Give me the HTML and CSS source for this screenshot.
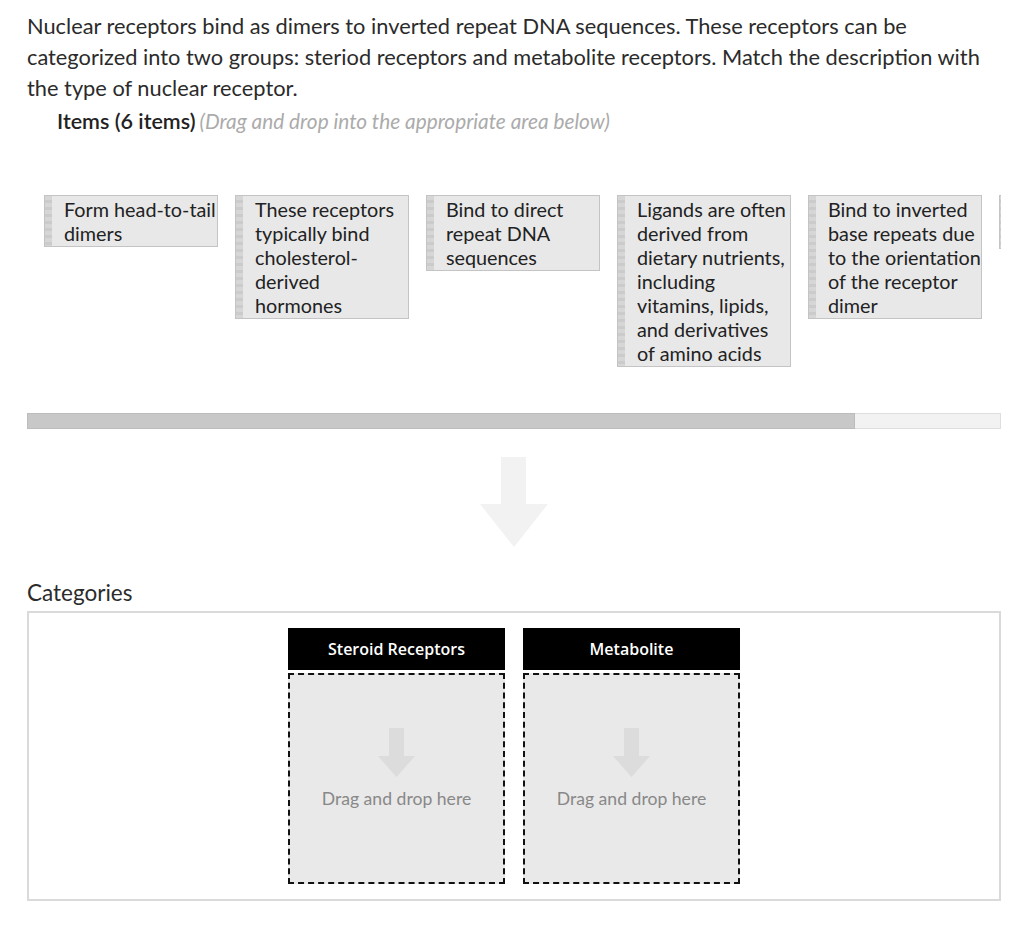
FILE: index.html
```html
<!DOCTYPE html>
<html lang="en">
<head>
<meta charset="utf-8">
<title>Nuclear receptors – matching</title>
<link rel="stylesheet" href="styles.css">
</head>
<body>
  <p class="prompt">Nuclear receptors bind as dimers to inverted repeat DNA sequences. These receptors can be categorized into two groups: steriod receptors and metabolite receptors. Match the description with the type of nuclear receptor.</p>

  <div class="items-title"><span class="items-label">Items (6 items)</span> <span class="items-hint">(Drag and drop into the appropriate area below)</span></div>

  <div class="items-scroll">
    <div class="items-track">
      <div class="card"><span class="handle"></span><span class="card-text">Form head-to-tail dimers</span></div>
      <div class="card"><span class="handle"></span><span class="card-text">These receptors typically bind cholesterol-derived hormones</span></div>
      <div class="card"><span class="handle"></span><span class="card-text">Bind to direct repeat DNA sequences</span></div>
      <div class="card"><span class="handle"></span><span class="card-text">Ligands are often derived from dietary nutrients, including vitamins, lipids, and derivatives of amino acids</span></div>
      <div class="card"><span class="handle"></span><span class="card-text">Bind to inverted base repeats due to the orientation of the receptor dimer</span></div>
      <div class="card card-offscreen"><span class="handle"></span><span class="card-text"></span></div>
    </div>
  </div>
  <div class="scrollbar"><div class="scroll-thumb"></div></div>

  <div class="big-arrow">
    <svg width="68" height="90" viewBox="0 0 68 90"><polygon points="21,0 46,0 46,47 68,47 34,90 0,47 21,47" fill="#f2f2f2"/></svg>
  </div>

  <h2 class="categories-title">Categories</h2>
  <div class="categories">
    <div class="category">
      <div class="category-head">Steroid Receptors</div>
      <div class="dropzone">
        <svg class="drop-arrow" width="37" height="49" viewBox="0 0 37 49"><polygon points="11,0 26,0 26,28 37,28 18.5,49 0,28 11,28" fill="#dcdcdc"/></svg>
        <div class="drop-text">Drag and drop here</div>
      </div>
    </div>
    <div class="category">
      <div class="category-head">Metabolite</div>
      <div class="dropzone">
        <svg class="drop-arrow" width="37" height="49" viewBox="0 0 37 49"><polygon points="11,0 26,0 26,28 37,28 18.5,49 0,28 11,28" fill="#dcdcdc"/></svg>
        <div class="drop-text">Drag and drop here</div>
      </div>
    </div>
  </div>
</body>
</html>
```

FILE: styles.css
```css
html, body {
  background: #fff;
}

body {
  margin: 0;
  padding: 10px 23px 40px 27px;
  font-family: Lato, "Open Sans", "Liberation Sans", sans-serif;
  color: #2b2b2b;
}

.prompt {
  margin: 0;
  font-size: 21.8px;
  line-height: 31px;
}

.items-title {
  margin: 6px 0 0 30px;
  line-height: 24px;
}

.items-label {
  font-size: 21.5px;
  font-weight: 600;
  color: #222;
}

.items-hint {
  font-size: 20.8px;
  font-style: italic;
  color: #ababab;
}

.items-scroll {
  margin-top: 60px;
  overflow: hidden;
  height: 218px;
}

.items-track {
  display: flex;
  align-items: flex-start;
  gap: 17px;
  padding-left: 17px;
}

.card {
  flex: 0 0 174px;
  box-sizing: border-box;
  display: flex;
  background: #e8e8e8;
  border: 1px solid #c4c4c4;
  font-size: 19.8px;
  line-height: 24px;
  color: #222;
}

.card-offscreen {
  height: 54px;
}

.handle {
  flex: 0 0 7px;
  align-self: stretch;
  background:
    repeating-linear-gradient(to bottom, #d6d6d6 0 4px, #cbcbcb 4px 7px);
}

.card-text {
  padding: 1px 0 1px 12px;
  flex: 1;
  min-width: 0;
}

/* custom scrollbar under the card strip */
.scrollbar {
  height: 16px;
  box-sizing: border-box;
  background: #f2f2f2;
  border: 1px solid #dedede;
  display: flex;
}

.scroll-thumb {
  width: 85.2%;
  background: #c8c8c8;
  box-shadow: inset 0 0 0 1px #bcbcbc;
  margin: -1px 0 -1px -1px;
}

.big-arrow {
  display: flex;
  justify-content: center;
  margin-top: 28px;
}

.big-arrow svg {
  display: block;
}

.categories-title {
  margin: 34px 0 0;
  font-size: 22.5px;
  font-weight: 400;
  line-height: 24px;
  color: #2b2b2b;
}

.categories {
  margin-top: 6px;
  border: 2px solid #dadada;
  padding: 15px;
  display: flex;
  justify-content: center;
  gap: 18px;
}

.category {
  width: 217px;
}

.category-head {
  height: 42px;
  background: #000;
  color: #fff;
  font-family: "Open Sans", "DejaVu Sans", sans-serif;
  font-weight: 600;
  font-size: 16px;
  display: flex;
  align-items: center;
  justify-content: center;
}

.dropzone {
  margin-top: 3px;
  height: 211px;
  box-sizing: border-box;
  border: 2px dashed #111;
  background: #e9e9e9;
  display: flex;
  flex-direction: column;
  align-items: center;
  padding-top: 53px;
}

.drop-arrow {
  display: block;
}

.drop-text {
  margin-top: 12px;
  font-size: 17.6px;
  line-height: 20px;
  color: #888;
}
```
